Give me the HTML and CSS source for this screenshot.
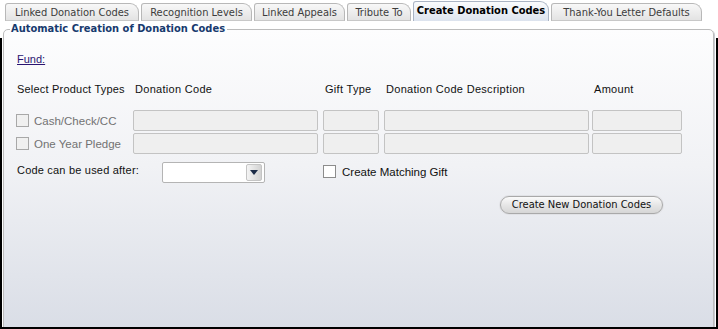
FILE: index.html
```html
<!DOCTYPE html>
<html>
<head>
<meta charset="utf-8">
<link rel="stylesheet" href="styles.css">
</head>
<body>
<div class="page">
  <div class="tabs">
    <div class="tab w1">Linked Donation Codes</div>
    <div class="tab w2">Recognition Levels</div>
    <div class="tab w3">Linked Appeals</div>
    <div class="tab w4">Tribute To</div>
    <div class="tab active w5">Create Donation Codes</div>
    <div class="tab w6">Thank-You Letter Defaults</div>
  </div>
  <fieldset class="group">
    <legend class="legend">Automatic Creation of Donation Codes</legend>
    <div class="fund"><a class="fund-link">Fund:</a></div>
    <div class="grid">
      <div class="hdr first">Select Product Types</div>
      <div class="hdr">Donation Code</div>
      <div class="hdr">Gift Type</div>
      <div class="hdr">Donation Code Description</div>
      <div class="hdr">Amount</div>

      <div class="prod"><span class="cb disabled"></span><span class="dis-label">Cash/Check/CC</span></div>
      <div><div class="inp code"></div></div>
      <div><div class="inp gift"></div></div>
      <div><div class="inp desc"></div></div>
      <div><div class="inp amt"></div></div>

      <div class="prod"><span class="cb disabled"></span><span class="dis-label">One Year Pledge</span></div>
      <div><div class="inp code"></div></div>
      <div><div class="inp gift"></div></div>
      <div><div class="inp desc"></div></div>
      <div><div class="inp amt"></div></div>
    </div>
    <div class="code-row">
      <div class="code-label">Code can be used after:</div>
      <div class="select">
        <div class="select-btn"><svg width="8" height="5" viewBox="0 0 8 5"><path d="M0 0H8L4 5Z" fill="#1c2c48"/></svg></div>
      </div>
      <div class="match"><span class="cb"></span><span class="match-label">Create Matching Gift</span></div>
    </div>
    <div class="btn-row">
      <div class="btn">Create New Donation Codes</div>
    </div>
  </fieldset>
</div>
</body>
</html>
```
FILE: styles.css
```css
html, body {
  margin: 0;
  padding: 0;
  background: #ffffff;
}
.page {
  position: relative;
  width: 718px;
  height: 329px;
  overflow: hidden;
  background: #ffffff;
}
.page::after {
  content: "";
  position: absolute;
  top: 38px;
  left: 0;
  right: 0;
  bottom: 0;
  border: 2px solid #000;
  border-top: none;
  pointer-events: none;
}
.tabs {
  display: flex;
  align-items: flex-end;
  gap: 2px;
  height: 21px;
  padding-left: 5px;
  box-sizing: border-box;
}
.tab {
  box-sizing: border-box;
  height: 18px;
  line-height: 17px;
  border: 1px solid #b8b8b8;
  border-bottom: 1px solid #c8c8c8;
  border-radius: 3px 9px 0 0;
  background: linear-gradient(#f8f8f8, #e3e3e3);
  font-family: "DejaVu Sans Condensed", "DejaVu Sans", sans-serif;
  font-size: 11px;
  color: #3c3c3c;
  text-align: center;
  white-space: nowrap;
}
.tab.active {
  height: 20px;
  line-height: 18px;
  font-weight: bold;
  color: #000;
  border-color: #aab4c4;
  border-bottom: none;
  background: linear-gradient(#fbfcfd, #dce3ee);
}
.w1 { width: 134px; }
.w2 { width: 111px; }
.w3 { width: 91px; }
.w4 { width: 64px; }
.w5 { width: 136px; }
.w6 { width: 151px; }

.group {
  box-sizing: border-box;
  width: 711px;
  height: 310px;
  margin: 1px 0 0 3px;
  padding: 0 0 0 12px;
  border: 1px solid #bcbcbc;
  border-radius: 5px;
  box-shadow: 1px 1px 0 #c9ccd3;
  background: linear-gradient(#fdfdfe 0%, #f1f2f5 45%, #d9dde6 100%);
  min-width: 0;
}
.legend {
  margin-left: -6px;
  padding: 0 2px 0 1px;
  font-family: "DejaVu Sans Condensed", "DejaVu Sans", sans-serif;
  font-weight: bold;
  font-size: 11px;
  line-height: 14px;
  color: #173a6e;
}
.fund {
  margin-top: 16px;
  padding-left: 1px;
  font-family: "Liberation Sans", Arial, sans-serif;
  font-size: 11px;
  line-height: 14px;
}
.fund-link {
  color: #2a1470;
  text-decoration: underline;
}
.grid {
  display: grid;
  grid-template-columns: 117px 190px 61px 208px 90px;
  grid-template-rows: 26px 21px 21px;
  row-gap: 2px;
  margin-top: 16px;
  font-family: "Liberation Sans", Arial, sans-serif;
  font-size: 11px;
}
.grid .hdr {
  line-height: 14px;
  color: #111;
  padding-left: 2px;
  white-space: nowrap;
  letter-spacing: 0.3px;
}
.grid .hdr.first {
  padding-left: 1px;
  letter-spacing: 0.2px;
}
.prod {
  display: flex;
  align-items: center;
  gap: 5px;
}
.cb {
  display: inline-block;
  box-sizing: border-box;
  width: 13px;
  height: 13px;
  border: 1px solid #8c8c8c;
  background: #ffffff;
}
.cb.disabled {
  border-color: #a8a8a8;
  background: #f0f0f0;
}
.dis-label {
  color: #727272;
  font-size: 11.5px;
}
.inp {
  box-sizing: border-box;
  height: 21px;
  border: 1px solid #c3c3c3;
  border-radius: 2px;
  background: #efefef;
}
.inp.code { width: 185px; }
.inp.gift { width: 56px; }
.inp.desc { width: 205px; }
.inp.amt { width: 90px; }

.code-row {
  display: flex;
  align-items: flex-start;
  margin-top: 8px;
  font-family: "Liberation Sans", Arial, sans-serif;
  font-size: 11px;
}
.code-label {
  width: 146px;
  padding: 1px 0 0 1px;
  box-sizing: border-box;
  line-height: 14px;
  color: #111;
  letter-spacing: 0.2px;
}
.select {
  box-sizing: border-box;
  width: 103px;
  height: 21px;
  border: 1px solid #b4b4b4;
  border-radius: 2px;
  background: #fff;
  display: flex;
  justify-content: flex-end;
  align-items: center;
  padding-right: 2px;
}
.select-btn {
  box-sizing: border-box;
  width: 16px;
  height: 17px;
  border: 1px solid #c4c4c4;
  border-radius: 2px;
  background: linear-gradient(90deg, #f4f4f4, #d2d2d2);
  display: flex;
  align-items: center;
  justify-content: center;
}
.match {
  display: flex;
  align-items: center;
  gap: 6px;
  margin-left: 58px;
  margin-top: 3px;
}
.match-label {
  color: #111;
  font-size: 11.5px;
}
.btn-row {
  display: flex;
  margin-top: 13px;
  padding-left: 484px;
}
.btn {
  box-sizing: border-box;
  width: 163px;
  height: 18px;
  border: 1px solid #a9a9a9;
  border-radius: 9px;
  background: linear-gradient(#fafafa, #e6e6e6 50%, #d6d6d6);
  box-shadow: 0 0 0 1px #e1e2e6;
  font-family: "DejaVu Sans Condensed", "DejaVu Sans", sans-serif;
  font-size: 11px;
  line-height: 16px;
  text-align: center;
  color: #111;
}
```
